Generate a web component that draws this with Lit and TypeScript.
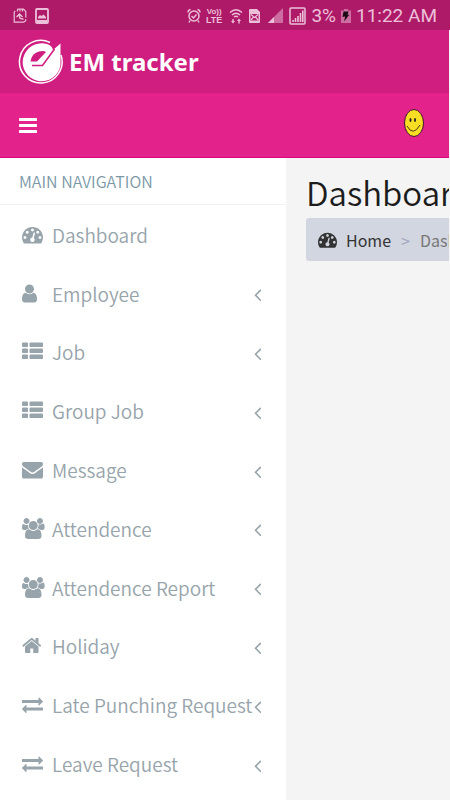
import { LitElement, html, css } from "lit";
import { customElement } from "lit/decorators.js";

const bar = (y: number) =>
  `M1664 ${y}v128q0 26-19 45t-45 19h-1408q-26 0-45-19t-19-45v-128q0-26 19-45t45-19h1408q26 0 45 19t19 45z`;
const cell = (x: number, y: number, w: number) =>
  `M${x} ${y}v192q0 40-28 68t-68 28h-${w}q-40 0-68-28t-28-68v-192q0-40 28-68t68-28h${w}q40 0 68 28t28 68z`;

// Each glyph: left edge, width and path on a 1792-unit em square.
const glyphs: Record<string, [number, number, string]> = {
  gauge: [0, 1792, "M384 1152q0-53-37.5-90.5t-90.5-37.5-90.5 37.5-37.5 90.5 37.5 90.5 90.5 37.5 90.5-37.5 37.5-90.5zm192-448q0-53-37.5-90.5t-90.5-37.5-90.5 37.5-37.5 90.5 37.5 90.5 90.5 37.5 90.5-37.5 37.5-90.5zm428 481l101-382q6-26-7.5-48.5t-38.5-29.5-48 6.5-30 39.5l-101 382q-60 5-107 43.5t-63 98.5q-20 77 20 146t117 89 146-20 89-117q16-60-6-117t-72-91zm660-33q0-53-37.5-90.5t-90.5-37.5-90.5 37.5-37.5 90.5 37.5 90.5 90.5 37.5 90.5-37.5 37.5-90.5zm-640-640q0-53-37.5-90.5t-90.5-37.5-90.5 37.5-37.5 90.5 37.5 90.5 90.5 37.5 90.5-37.5 37.5-90.5zm448 192q0-53-37.5-90.5t-90.5-37.5-90.5 37.5-37.5 90.5 37.5 90.5 90.5 37.5 90.5-37.5 37.5-90.5zm320 448q0 261-141 483-19 29-54 29h-1402q-35 0-54-29-141-221-141-483 0-182 71-348t191-286 286-191 348-71 348 71 286 191 191 286 71 348z"],
  user: [256, 1280, "M1536 1399q0 109-62.5 187t-150.5 78h-854q-88 0-150.5-78t-62.5-187q0-85 8.5-160.5t31.5-152 58.5-131 94-89 134.5-34.5q131 128 313 128t313-128q76 0 134.5 34.5t94 89 58.5 131 31.5 152 8.5 160.5zm-256-887q0 159-112.5 271.5t-271.5 112.5-271.5-112.5-112.5-271.5 112.5-271.5 271.5-112.5 271.5 112.5 112.5 271.5z"],
  list: [0, 1792, [224, 736, 1248].map((y) => cell(512, y, 320) + cell(1792, y, 960)).join("")],
  mail: [0, 1792, "M1792 710v794q0 66-47 113t-113 47h-1472q-66 0-113-47t-47-113v-794q44 49 101 87 362 246 497 345 57 42 92.5 65.5t94.5 48 110 24.5h2q51 0 110-24.5t94.5-48 92.5-65.5q170-123 498-345 57-39 100-87zm0-294q0 79-49 151t-122 123q-376 261-468 325-10 7-42.5 31t-54 38.5-52 32.5-57.5 27-50 9h-2q-23 0-50-9t-57.5-27-52-32.5-54-38.5-42.5-31q-91-64-262-182.5t-205-142.5q-62-42-117-115.5t-55-136.5q0-78 41.5-130t118.5-52h1472q65 0 112.5 47t47.5 113z"],
  users: [-64, 1920, "M529 896q-162 5-265 128h-134q-82 0-138-40.5t-56-118.5q0-353 124-353 6 0 43.5 21t97.5 42.5 119 21.5q67 0 133-23-5 37-5 66 0 159 93 293zm1071 637q0 120-73 189.5t-194 69.5h-874q-121 0-194-69.5t-73-189.5q0-53 3.5-103.5t14-109 26.5-108.5 43-97.5 62-81 85.5-53.5 111.5-20q10 0 43 21.5t73 48 107 48 135 21.5 135-21.5 107-48 73-48 43-21.5q61 0 111.5 20t85.5 53.5 62 81 43 97.5 26.5 108.5 14 109 3.5 103.5zm-1024-1277q0 106-75 181t-181 75-181-75-75-181 75-181 181-75 181 75 75 181zm704 384q0 159-112.5 271.5t-271.5 112.5-271.5-112.5-112.5-271.5 112.5-271.5 271.5-112.5 271.5 112.5 112.5 271.5zm576 225q0 78-56 118.5t-138 40.5h-134q-103-123-265-128 93-134 93-293 0-29-5-66 66 23 133 23 59 0 119-21.5t97.5-42.5 43.5-21q124 0 124 353zm-128-609q0 106-75 181t-181 75-181-75-75-181 75-181 181-75 181 75 75 181z"],
  home: [64, 1664, "M1472 992v480q0 26-19 45t-45 19h-384v-384h-256v384h-384q-26 0-45-19t-19-45v-480q0-1 .5-3t.5-3l575-474 575 474q1 2 1 6zm223-69l-62 74q-8 9-21 11h-3q-13 0-21-7l-692-577-692 577q-12 8-24 7-13-2-21-11l-62-74q-8-10-7-23.5t11-21.5l719-599q32-26 76-26t76 26l244 204v-195q0-14 9-23t23-9h192q14 0 23 9t9 23v408l219 182q10 8 11 21.5t-7 23.5z"],
  swap: [0, 1792, "M1792 1184v192q0 13-9.5 22.5t-22.5 9.5h-1376v192q0 13-9.5 22.5t-22.5 9.5q-12 0-24-10l-319-320q-9-9-9-22 0-14 9-23l320-320q9-9 23-9 13 0 22.5 9.5t9.5 22.5v192h1376q13 0 22.5 9.5t9.5 22.5zm0-544q0 14-9 23l-320 320q-9 9-23 9-13 0-22.5-9.5t-9.5-22.5v-192h-1376q-13 0-22.5-9.5t-9.5-22.5v-192q0-13 9.5-22.5t22.5-9.5h1376v-192q0-14 9-23t23-9q12 0 24 10l319 319q9 9 9 23z"],
  left: [576, 640, "M1203 544q0 13-10 23l-393 393 393 393q10 10 10 23t-10 23l-50 50q-10 10-23 10t-23-10l-466-466q-10-10-10-23t10-23l466-466q10-10 23-10t23 10l50 50q10 10 10 23z"],
  bars: [128, 1536, bar(1344) + bar(832) + bar(320)],
};

const icon = (name: string) => {
  const [x, w, d] = glyphs[name];
  return html`<svg class="glyph" viewBox="${x} 0 ${w} 1792" aria-hidden="true"><path d=${d}></path></svg>`;
};

const items: [string, string, boolean][] = [
  ["gauge", "Dashboard", false],
  ["user", "Employee", true],
  ["list", "Job", true],
  ["list", "Group Job", true],
  ["mail", "Message", true],
  ["users", "Attendence", true],
  ["users", "Attendence Report", true],
  ["home", "Holiday", true],
  ["swap", "Late Punching Request", true],
  ["swap", "Leave Request", true],
];

@customElement("status-bar")
class StatusBar extends LitElement {
  static styles = css`
    :host {
      display: flex;
      align-items: center;
      height: 30px;
      padding: 2px 13px 0 13px;
      box-sizing: border-box;
      background: #ae1a68;
      color: #edc0d9;
      font: 19px/28px Roboto, sans-serif;
      white-space: nowrap;
    }
    svg { display: block; flex: none; fill: none; stroke: currentColor; }
    .fill { fill: currentColor; stroke: none; }
    .faint { fill: currentColor; fill-opacity: 0.5; stroke: none; }
    .dark { fill: #1b0a14; stroke: none; }
    .left { display: flex; gap: 8px; margin-right: auto; }
    .right { display: flex; align-items: center; gap: 5px; }
    .volte { font: 700 9px/9px "Liberation Sans", sans-serif; text-align: center; }
    .volte span { display: block; }
    .vo { font-size: 8px; line-height: 8px; }
  `;
  render() {
    return html`
      <div class="left">
        <svg width="14" height="16" viewBox="0 0 14 16"><path d="M4.500 1.200H10.500l2.300 2.300v6M1.200 4v10.200h9.500l2-1.500v-1.500M1.200 4l1-1M4.500 1v2.500M7 1v2.500M9.500 1v2.500" stroke-width="1.200"></path><path d="M3.500 9l3-3 3 3M6.500 6.500v2.500q0 2 4 2" stroke-width="1.400"></path></svg>
        <svg width="14" height="16" viewBox="0 0 14 16"><rect x="1" y="1" width="12" height="14" rx="1" stroke-width="1.800"></rect><path class="fill" d="M3 10.500V9l2-2 1.500 1L8.500 6.500 11 9v1.500zM2 12h10v2H2z"></path></svg>
      </div>
      <div class="right">
        <svg width="14" height="16" viewBox="0 0 14 16"><circle cx="7" cy="8" r="5" stroke-width="1.500"></circle><path d="M1 4.500Q1 2 3.500 1.500M13 4.500Q13 2 10.500 1.500M4.500 8l2 2 3-3.500M3 12.500l-1 2M11 12.500l1 2" stroke-width="1.400"></path></svg>
        <div class="volte"><span class="vo">Vo))</span><span>LTE</span></div>
        <svg width="16" height="16" viewBox="-2 0 16 16"><path d="M1 4.500Q7-1 13 4.500M3 7q4-3.500 8 0M5 9q2-1.500 4 0" stroke-width="1.400"></path><path class="fill" d="M4 15.500l-2-2.500h1.300v-2h1.400v2h1.300zM10 10.500l2 2.500h-1.300v2.500H9.300V13H8z"></path></svg>
        <svg width="13" height="16" viewBox="0 0 13 16"><path class="fill" fill-rule="evenodd" d="M2 1h7l3 3v10q0 1-1 1H2q-1 0-1-1V2q0-1 1-1zM2.500 6v6.500h8V6z"></path><path d="M3 6.500l3.500 3 3.500-3M3 12l2.500-3M10 12L7.500 9" stroke-width="1.200"></path></svg>
        <svg width="18" height="16" viewBox="-1 0 18 16"><path class="faint" d="M16 0v15H1z"></path><path class="fill" d="M7 9v6H1z"></path></svg>
        <svg width="17" height="18" viewBox="0 0 17 18"><rect x="1" y="1" width="15" height="16" rx="1" stroke-width="1.500"></rect><path d="M4 13v2M6.500 11v4M9 9v6M11.500 6v9M13.800 3.500V15" stroke-width="1.600"></path></svg>
        <span>3%</span>
        <svg width="10" height="16" viewBox="0 0 10 16"><path class="faint" d="M3 1h4v1.500h3V15H0V2.500h3z"></path><path class="dark" d="M2.500 3.500h5L6.500 7l2-.5-5.500 7 1.200-5-2.700.5z"></path></svg>
        <span>11:22 AM</span>
      </div>
    `;
  }
}

@customElement("app-root")
class AppRoot extends LitElement {
  static styles = css`
    :host {
      display: flex;
      flex-direction: column;
      min-height: 100vh;
      overflow: hidden;
      background: #f4f4f4;
      font-family: "Noto Sans CJK SC", sans-serif;
    }
    .glyph { display: block; flex: none; height: 21px; fill: currentColor; }
    .brand {
      display: flex;
      align-items: center;
      height: 63px;
      gap: 5px;
      margin-right: 1px;
      padding: 0 18px;
      box-sizing: border-box;
      background: #cf1e7f;
      color: #fff;
      text-decoration: none;
      font: 700 24px/32px "Noto Sans", sans-serif;
    }
    .logo { display: block; flex: none; }
    .bar {
      display: flex;
      align-items: center;
      justify-content: space-between;
      height: 65px;
      margin-right: 1px;
      padding: 0 24px 0 19px;
      box-sizing: border-box;
      background: #e3228c;
      border-bottom: 1px solid #d8087c;
    }
    button { padding: 0; border: 0; background: none; color: #fff; }
    .body { display: flex; flex: 1; margin-right: 1px; }
    .side { flex: none; width: 286px; background: #fff; }
    h2 {
      margin: 0;
      padding: 0 19px;
      font-weight: 350;
      font-size: 16px;
      line-height: 46px;
      color: #7a98a6;
      border-bottom: 1px solid #f0f1f2;
    }
    ul, ol { list-style: none; margin: 0; padding: 0; }
    ul { display: grid; grid-auto-rows: 1fr; height: 588px; }
    .item {
      display: flex;
      align-items: center;
      height: 100%;
      padding: 0 25px 0 22px;
      box-sizing: border-box;
      color: #97a4ab;
      text-decoration: none;
      font-size: 19px;
      font-weight: 350;
      white-space: nowrap;
    }
    .mark { flex: none; width: 30px; }
    .label { flex: 1; min-width: 0; }
    .more { padding-top: 3px; }
    main { flex: 1; min-width: 0; padding: 14px 0 0 20px; overflow: hidden; }
    h1 { margin: 0; font-weight: 350; font-size: 33px; line-height: 40px; color: #1c1c1c; }
    .crumbs {
      display: flex;
      align-items: center;
      height: 43px;
      margin-top: 6px;
      padding: 0 12px;
      border-radius: 3px 0 0 3px;
      background: #d2d6e0;
      color: #777;
      font-size: 16px;
      white-space: nowrap;
      overflow: hidden;
    }
    .crumbs a { display: flex; align-items: center; gap: 9px; color: #333; text-decoration: none; }
    .crumbs .glyph { height: 19px; }
    .sep { padding: 0 10px; color: #a4a9c0; }
  `;
  render() {
    return html`
      <status-bar></status-bar>
      <a class="brand" href="#">
        <svg class="logo" width="46" height="46" viewBox="0 0 46 46" aria-hidden="true">
          <path d="M32 3.500A21.300 21.300 0 1 0 43 16" fill="none" stroke="#fff" stroke-width="1.500"></path>
          <path fill="#fff" d="M42.500 4.500V26A19 19 0 1 1 29 5Q34 6.500 35 11z"></path>
          <path fill="#cf1e7f" d="M12.500 22.500Q14 14 21 12.500Q26 11.500 28 13L19 22.500z"></path>
          <path fill="none" stroke="#cf1e7f" stroke-width="1.600" d="M14 26.500H24.500L36.500 10"></path>
        </svg>
        <span>EM tracker</span>
      </a>
      <header class="bar">
        <button aria-label="Toggle navigation">${icon("bars")}</button>
        <button aria-label="Account">
          <svg class="logo" width="22" height="32" viewBox="0 0 22 32">
            <ellipse cx="11" cy="14" rx="9.500" ry="13.500" fill="#f7dd24" stroke="#3d1630"></ellipse>
            <ellipse cx="7.500" cy="11" rx="1" ry="2" fill="#222"></ellipse>
            <ellipse cx="12" cy="11" rx="1" ry="2" fill="#222"></ellipse>
            <path d="M4 17q6 11 13-1" fill="none" stroke="#4a3a10"></path>
          </svg>
        </button>
      </header>
      <div class="body">
        <nav class="side">
          <h2>MAIN NAVIGATION</h2>
          <ul>
            ${items.map(([glyph, label, more]) => html`<li><a class="item" href="#"><span class="mark">${icon(glyph)}</span><span class="label">${label}</span>${more ? html`<span class="more">${icon("left")}</span>` : ""}</a></li>`)}
          </ul>
        </nav>
        <main>
          <h1>Dashboard</h1>
          <ol class="crumbs">
            <li><a href="#">${icon("gauge")}<span>Home</span></a></li>
            <li class="sep">&gt;</li>
            <li>Dashboard</li>
          </ol>
        </main>
      </div>
    `;
  }
}
